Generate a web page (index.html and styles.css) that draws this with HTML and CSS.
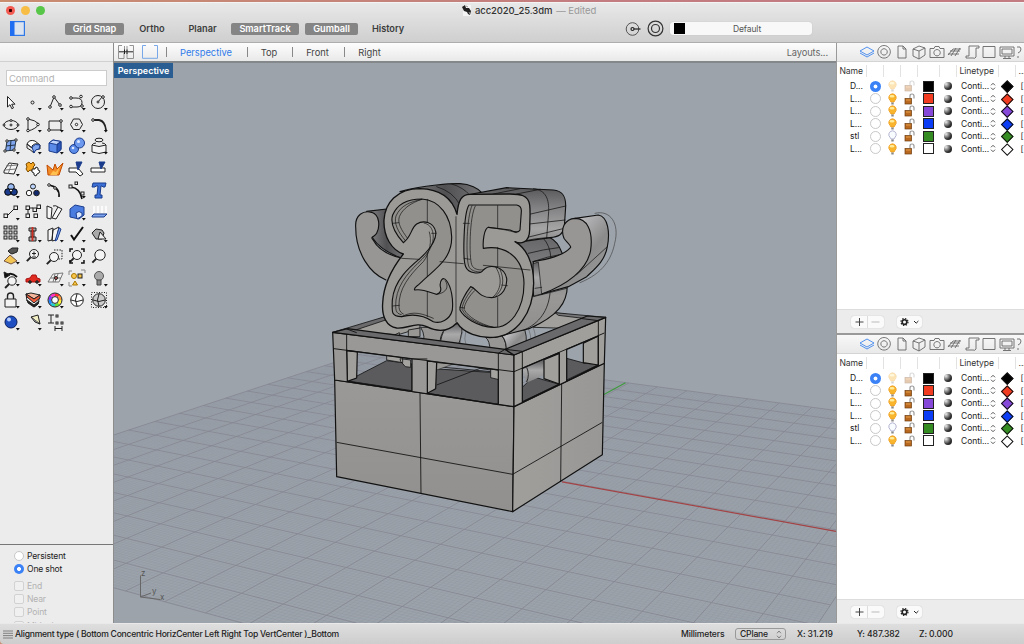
FILE: index.html
```html
<!DOCTYPE html>
<html lang="en">
<head>
<meta charset="utf-8">
<title>acc2020_25.3dm</title>
<link rel="stylesheet" href="styles.css">
</head>
<body>
<div class="window">
  <header class="titlebar">
    <div class="title-row">
      <div class="lights"><i class="light close"></i><i class="light min"></i><i class="light max"></i></div>
      <div class="doc-title">
        <svg width="11" height="11" viewBox="0 0 11 11"><path d="M2 0h8v11H2z" fill="#f4f4f4"/><path d="M1 2l3-2 1 3 3 0 2 3-1 4-2-1-1-2-3-1z" fill="#222"/><path d="M5 1l2 1M8 7l1 2" stroke="#999"/></svg>
        <span class="doc-name">acc2020_25.3dm</span><span class="edited">— Edited</span>
      </div>
    </div>
    <div class="tool-row">
      <svg class="side-toggle" width="15" height="15" viewBox="0 0 15 15"><rect x=".6" y=".6" width="13.8" height="13.8" fill="#dbe3ee" stroke="#2f78e8" stroke-width="1.2"/><rect width="4.5" height="15" fill="#1f6df0"/></svg>
      <div class="toggles">
        <span class="toggle on" style="width:59px">Grid Snap</span>
        <span class="toggle" style="width:56px">Ortho</span>
        <span class="toggle" style="width:45px">Planar</span>
        <span class="toggle on" style="width:68px">SmartTrack</span>
        <span class="toggle on" style="width:53px">Gumball</span>
        <span class="toggle" style="width:48px">History</span>
      </div>
      <div class="right-tools">
        <svg width="16" height="16" viewBox="0 0 16 16" fill="none" stroke="#555"><circle cx="7.5" cy="8" r="6.3"/><circle cx="7.5" cy="8" r="1.5" stroke="#222" stroke-width="1.2"/><path d="M9 8h6.5" stroke="#222" stroke-width="1.2"/></svg>
        <svg width="17" height="17" viewBox="0 0 17 17" fill="none" stroke="#333" stroke-width="1.2"><circle cx="8.5" cy="8.5" r="7.4"/><circle cx="8.5" cy="8.5" r="4"/></svg>
        <div class="layer-select"><i class="black"></i><span>Default</span></div>
      </div>
    </div>
  </header>
  <main class="workspace">
    <aside class="sidebar">
      <div class="side-head"></div>
      <div class="command-box"><div class="command">Command</div></div>
      <div class="tools" id="tools"></div>
      <div class="osnap">
        <div class="opt"><i class="radio"></i>Persistent</div>
        <div class="opt"><i class="radio checked"></i>One shot</div>
        <div class="opt off first"><i class="check"></i>End</div>
        <div class="opt off"><i class="check"></i>Near</div>
        <div class="opt off"><i class="check"></i>Point</div>
        <div class="opt off"><i class="check"></i>Midpoint</div>
      </div>
    </aside>
    <section class="center">
      <nav class="tabs">
        <svg width="16" height="14" viewBox="0 0 16 14" fill="none" stroke="#888"><path d="M4 .5H.5v13h5.500V8M11.500 .5h4v13H9V8M6.500 1v5M9 1v5" stroke-width=".9"/><path d="M1 6.800h14M6.500 4.500v4.500M9 4.500v4.500" stroke="#222"/></svg>
        <svg class="single" width="16" height="14" viewBox="0 0 16 14"><path d="M4 .5H.5v12.800h15V.5H12" fill="none" stroke="#79a8e8"/></svg>
        <i class="bar"></i><span class="tab active" style="width:76px">Perspective</span>
        <i class="bar"></i><span class="tab" style="width:40px">Top</span>
        <i class="bar"></i><span class="tab" style="width:47px">Front</span>
        <i class="bar"></i><span class="tab" style="width:47px">Right</span>
        <span class="layouts">Layouts...</span>
      </nav>
      <div class="viewport">
        <svg class="scene" width="722" height="560" viewBox="114 63 722 560">
          <defs>
            <linearGradient id="front" x1="0" y1="0" x2="0" y2="1"><stop offset="0" stop-color="#9a9997"/><stop offset="1" stop-color="#91908e"/></linearGradient>
            <linearGradient id="side" x1="0" y1="0" x2="1" y2="0"><stop offset="0" stop-color="#a09f9c"/><stop offset="1" stop-color="#989795"/></linearGradient>
            <linearGradient id="bevel" x1="0" y1="0" x2="1" y2="0"><stop offset="0" stop-color="#8a8a8b"/><stop offset=".55" stop-color="#505053"/><stop offset="1" stop-color="#747476"/></linearGradient>
            <linearGradient id="cyl" x1="0" y1="0" x2="1" y2="1"><stop offset="0" stop-color="#737375"/><stop offset=".3" stop-color="#bdbdbf"/><stop offset=".6" stop-color="#8b8b8c"/><stop offset="1" stop-color="#a4a3a2"/></linearGradient>
            <linearGradient id="drop" x1="0" y1="0" x2="0" y2="1"><stop offset="0" stop-color="#5e5e60"/><stop offset=".45" stop-color="#a9a9aa"/><stop offset="1" stop-color="#848485"/></linearGradient>
            <linearGradient id="cap" x1="0" y1="0" x2="0" y2="1"><stop offset="0" stop-color="#58585a"/><stop offset=".35" stop-color="#808082"/><stop offset=".75" stop-color="#a5a5a6"/><stop offset="1" stop-color="#88888a"/></linearGradient>
            <linearGradient id="belly" x1="0" y1="0" x2="0" y2="1"><stop offset="0" stop-color="#636365"/><stop offset=".3" stop-color="#7c7c7e"/><stop offset=".6" stop-color="#999897"/><stop offset="1" stop-color="#8e8d8c"/></linearGradient>
          </defs>
          <g id="grid"></g>
          <path d="M562 481.800L836 531.300" stroke="#a34345" stroke-width="1.200"/>
          <path d="M603 395L625.500 382.700" stroke="#3f9a3f" stroke-width="1.200"/>
          <!-- box interior -->
          <g transform="translate(320 300) scale(.33333)" stroke="#151515" stroke-width="2.500" stroke-linejoin="round">
            <path d="M80 96L195 50L300 60L300 84L235 104Z" fill="#9f9e9b"/>
            <path d="M38 97L195 50L203 58L80 99Z" fill="#6b6b6d"/>
            <path d="M640 82L705 38L800 52L790 65L735 85Z" fill="#a1a09d"/>
            <path d="M705 38L857 52L815 58L715 46Z" fill="#77777a"/>
            <path d="M225 104l13-6v10zM265 90l35 -6v26h-35z" fill="#989794"/>
            <path d="M82 243L200 182L276 192V272ZM322 280V205L510 217L535 240V315ZM607 305V262L640 230L672 240L718 253ZM740 240V175L795 190L840 192Z" fill="#5b5b5e"/>
            <path d="M350 255L480 205L525 212M350 200L535 217" fill="none"/>
            <path d="M200 160l48 8v20l-48-8zM240 176l32 4v22l-16-2-14-16zM512 207l25 4v28l-25-6z" fill="#a4a3a0"/>
            <path d="M350 188L400 192L350 210z" fill="#999895" stroke-width="1.500"/>
            <path d="M607 206L672 180V225L620 248Z" fill="url(#drop)" stroke="none"/><path d="M620 202q10 22 0 44" fill="none"/>
            <path d="M305 140Q320 110 302 82L378 82Q356 110 360 140Z" fill="#969593"/>
            <path d="M360 140Q362 105 378 82L422 68Q434 85 412 145Z" fill="url(#drop)"/>
            <path d="M424 140q-8-20 5-45M440 145q-10-30-2-55" fill="none" stroke="#555" stroke-width="1.500"/>
            <path d="M510 155Q510 120 496 112L545 106Q562 130 558 156Z" fill="#979694"/>
            <path d="M558 156Q562 125 545 106L608 76Q625 105 616 148Z" fill="url(#cyl)"/>
            <path d="M622 82q15 22 8 55M637 79q12 20 8 50" fill="none" stroke="#555" stroke-width="1.500"/>
          </g>
          <!-- box body and frame -->
          <g transform="translate(320 300) scale(.33333)" stroke="#111" stroke-width="3.600" stroke-linejoin="round">
            <path d="M44 240L582 320L578 635L50 530Z" fill="url(#front)"/>
            <path d="M582 320L853 190L847 464L578 635Z" fill="url(#side)"/>
            <path d="M300 280L303 580M50 427L578 523L847 367M725 252L722 545" fill="none" stroke-width="2.600"/>
            <path d="M80 152L112 156L110 234L82 244ZM322 183L350 186L347 266L322 280ZM672 179L718 160V252L672 236ZM790 130L835 108V195L790 188Z" fill="#a19f9c"/>
            <path fill-rule="evenodd" d="M38 97L582 165V320L44 240ZM80 151L276 177V274L82 244ZM322 183L535 210V314L322 280Z" fill="#999896"/>
            <path fill-rule="evenodd" d="M582 165L857 52L853 190L582 320ZM607 205L718 158V252L607 306ZM740 148L835 108V195L740 243Z" fill="#a09f9c"/>
            <path d="M38 97L82 86L555 148L582 165Z" fill="#6a6a6c"/>
            <path d="M582 165L555 148L802 48L857 52Z" fill="#6a6a6c"/>
            <path d="M535 160L555 148L607 154M80 102V152M535 160V210M607 154V206M42 146L582 215L853 99M277 177H322M835 62V110M78 86L110 98M780 55L835 62" fill="none" stroke-width="2.800"/>
          </g>
          <!-- numeral ornament -->
          <g transform="translate(320 170) scale(.33333)" stroke="#111" stroke-width="3.400" stroke-linejoin="round" stroke-linecap="round">
            <path d="M140 124L200 117L215 190L250 252L245 265Q180 240 158 204Z" fill="url(#bevel)"/>
            <path d="M107 170C105 135 130 120 155 127C180 135 180 170 170 190C165 200 150 200 158 208C175 240 210 258 250 265L198 330C150 310 107 250 107 170Z" fill="#979694" stroke="none"/>
            <path d="M198 330C150 310 107 250 107 170C105 135 130 120 155 127C180 135 180 170 170 190C165 200 150 200 158 208C175 240 210 258 250 265" fill="none"/>
            <path d="M240 65C310 45 400 40 420 41C450 42 475 55 485 68L450 80L411 133L330 70Z" fill="url(#bevel)"/>
            <path d="M350 50Q400 65 420 105M395 42Q430 52 450 76" fill="none" stroke-width="2"/>
            <path d="M640 190L690 203C720 215 740 270 742 340C744 400 710 440 630 475L525 502L560 200Z" fill="url(#belly)"/>
            <path d="M440 75L560 53L700 60C725 62 738 75 737 110L733 170C728 195 715 200 690 203L586 218L560 100Z" fill="url(#cap)"/>
            <path d="M520 72L600 56M590 72L660 58M640 56C680 60 687 90 686 125L680 205M628 133L737 108M628 162L735 150M610 205L733 175M610 215Q635 205 690 203M625 250Q670 238 715 233M638 275Q680 260 729 252M670 205Q690 225 693 265M690 370C685 420 660 460 610 481M640 380L740 355" fill="none" stroke-width="2.200"/>
            <path d="M765 145L835 135C865 140 870 190 862 230C855 275 820 300 800 320L745 350L665 372L760 300Z" fill="url(#cyl)"/>
            <path d="M640 275C680 268 730 258 752 232C752 225 738 215 732 205C720 175 735 147 765 145C800 145 820 180 812 240C802 300 740 345 665 372L640 376Z" fill="#979694"/>
            <path d="M640 281L655 276L665 372L642 378Z" fill="url(#drop)" stroke-width="2"/>
            <path d="M770 314L862 230M645 355L665 352" fill="none" stroke-width="2"/>
            <path d="M825 130C870 118 900 160 884 220C875 265 850 310 780 338" fill="none" stroke="#444" stroke-width="2"/>
            <path d="M411 133C400 95 370 58 300 56C230 56 195 100 192 150C190 200 215 240 250 252C220 290 190 340 188 400C185 440 200 470 230 474C260 477 290 455 320 470C360 490 390 480 411 458C430 490 480 505 520 502C590 497 640 430 641 340C641 280 620 235 585 215C600 222 628 222 629 180C629 150 632 130 629 105C625 75 600 72 570 72L450 73C425 73 415 90 411 133Z" fill="#9b9a97" stroke-width="4"/>
            <path d="M250 218C225 190 210 160 218 135C235 95 270 87 305 87C360 90 393 140 395 200C397 270 340 300 300 340C290 350 280 352 284 360C310 355 335 370 350 373C360 370 365 362 361 350C358 330 370 320 378 330C395 350 400 390 397 420C390 450 360 462 340 455C310 435 280 430 245 440C215 440 215 430 217 390C222 330 270 290 300 265C340 230 350 200 347 185C340 155 310 150 290 162C272 175 275 200 250 218Z" fill="#91908d"/>
            <path d="M447 105L590 105C600 107 605 112 604 125L600 180C595 190 585 187 570 180L505 172C492 176 488 215 490 235C550 225 610 255 612 340C612 420 570 475 520 472C470 470 430 440 420 420C418 400 440 365 452 350C470 355 475 383 515 383C550 380 562 350 560 325C553 290 510 280 490 300C480 315 445 310 437 290C428 270 430 130 447 105Z" fill="#91908d"/>
            <path d="M256 212C234 185 221 160 228 138C242 106 270 96 305 88M262 204C244 180 232 160 238 140C248 115 275 98 305 88M244 434C226 430 226 420 228 390C235 335 275 298 306 268C335 240 344 210 338 185C334 170 325 162 312 159M250 432C236 425 236 415 238 390C244 340 285 300 310 275C330 250 336 210 328 186M245 440C280 420 310 432 340 445M376 332C388 350 380 368 352 373" fill="none" stroke-width="2"/>
            <path d="M456 107C440 140 437 260 446 288C450 302 470 306 480 306M466 108C448 140 447 260 455 284C460 298 475 300 488 300M464 362C450 375 433 400 432 418C445 442 480 462 520 472M458 356C444 372 427 398 426 418C440 446 480 466 520 472M540 298C555 330 550 360 525 380M528 293C548 325 544 360 518 382M505 172C540 176 570 182 588 188" fill="none" stroke-width="2"/>
            <path d="M322 88V158M322 248V320M322 366V440M408 140V455M533 107V175M533 232V290M533 383V470M245 265L298 268M360 275L430 281M490 286L630 300M218 160L236 158M218 408L238 406M430 160L448 160M432 265L450 268M420 412L434 414M545 345L562 347M335 190L348 190" fill="none" stroke-width="2"/>
          </g>
          <g stroke="#666" fill="none"><path d="M140.500 575.500V597L160 599.500M140.500 597L151 593"/></g>
          <g class="axis"><text x="141" y="576">z</text><text x="152" y="594">y</text><text x="160" y="600">x</text></g>
        </svg>
        <span class="view-label">Perspective</span>
      </div>
    </section>
    <aside class="panels">
      <section class="panel top-panel"></section>
      <section class="panel"></section>
    </aside>
  </main>
  <footer class="status">
    <svg width="10" height="9" viewBox="0 0 10 9"><path d="M0 1h10M0 3.300h10M0 5.600h10M0 8h10" stroke="#777" stroke-width=".9"/></svg>
    <span class="prompt">Alignment type ( Bottom Concentric HorizCenter Left Right Top VertCenter )_Bottom</span>
    <span class="units">Millimeters</span>
    <span class="cplane">CPlane<svg width="6" height="9" viewBox="0 0 6 9"><path d="M1 3.300l2-2.300 2 2.300M1 5.700l2 2.300 2-2.300" fill="none" stroke="#777" stroke-width=".9"/></svg></span>
    <span class="coord cx">X: 31.219</span><span class="coord cy">Y: 487.382</span><span class="coord cz">Z: 0.000</span>
  </footer>
</div>
<script src="app.js"></script>
</body>
</html>
```
FILE: styles.css
```css
* { box-sizing: border-box; }
body { margin: 0; width: 1024px; height: 644px; overflow: hidden; background: linear-gradient(90deg, #c98d70, #c37c80 60%, #c27c82); font-family: Inter, "Open Sans", sans-serif; font-size: 9px; color: #222; }
svg { display: block; flex: none; }
i { flex: none; }
.window { height: 644px; padding-top: 2px; display: flex; flex-direction: column; }
.titlebar { height: 41px; background: linear-gradient(#e8e8e8, #cfcfcf); border-bottom: 1px solid #adadad; border-top: 1px solid #f4f4f4; }
.title-row { height: 14px; display: flex; align-items: center; padding-left: 6px; }
.lights { display: flex; gap: 6px; width: 455px; }
.light { width: 9px; height: 9px; border-radius: 50%; }
.close { background: radial-gradient(circle, #300 0 1.300px, #f35b52 2px); }
.min { background: #f7bd45; }
.max { background: #58c648; }
.doc-title { display: flex; align-items: center; }
.doc-name { margin-left: 3px; color: #333; font-size: 9.500px; font-weight: 500; letter-spacing: -.1px; }
.edited { margin-left: 4px; color: #999; font-size: 9.500px; letter-spacing: -.05px; }
.tool-row { height: 23px; display: flex; align-items: center; padding-left: 10px; }
.toggles { display: flex; align-items: center; margin-left: 40px; }
.toggle { height: 12px; line-height: 12px; text-align: center; border-radius: 2px; font-weight: 600; font-size: 9.200px; color: #3c3c3c; }
.toggle.on { background: #858585; color: #fff; }
.toggle:nth-child(3) { margin-right: 6px; }
.toggle:nth-child(4) { margin-right: 6px; }
.toggle:nth-child(5) { margin-right: 6px; }
.right-tools { display: flex; align-items: center; gap: 6px; margin-left: 213px; }
.layer-select { width: 142px; height: 13px; background: #f8f8f8; border-radius: 3px; display: flex; align-items: center; padding-left: 4px; box-shadow: 0 0 1px #aaa; }
.layer-select .black { width: 11px; height: 11px; background: #000; }
.layer-select span { flex: 1; text-align: center; font-size: 8.500px; letter-spacing: -.1px; color: #555; padding-right: 3px; }
.workspace { height: 580px; display: flex; }
.sidebar { width: 114px; background: #ececec; border-right: 1px solid #8d8d8d; display: flex; flex-direction: column; }
.side-head { height: 19px; background: linear-gradient(#f8f8f8, #ededed); border-bottom: 1px solid #d0d0d0; }
.command-box { height: 29px; padding: 8px 6px 0; }
.command { height: 16px; border: 1px solid #ccc; background: #fff; color: #b3b3b3; font-size: 9.500px; line-height: 16px; padding-left: 2px; letter-spacing: -.1px; }
.tools { display: grid; grid-template-columns: repeat(5, 22px); grid-auto-rows: 22px; height: 453px; align-content: start; }
.tool { fill: none; stroke: #222; stroke-width: 1; }
.osnap { border-top: 1px solid #777; height: 79px; overflow: hidden; padding: 4px 0 0 14px; }
.opt { display: flex; align-items: center; gap: 3px; height: 13.300px; font-size: 8.600px; letter-spacing: -.18px; }
.opt.first { margin-top: 3.500px; }
.off { color: #b2b2b2; }
.radio { width: 11px; height: 11px; border-radius: 50%; background: #fff; border: 1px solid #c8c8c8; }
.radio.checked { border: 0; background: radial-gradient(circle, #fff 0 1.600px, #3b82f6 2.300px); }
.check { width: 10px; height: 10px; border-radius: 2px; background: #f0f0f0; border: 1px solid #d2d2d2; }
.opt .radio { width: 10px; height: 10px; }
.center { width: 722px; }
.tabs { height: 20px; background: linear-gradient(#fdfdfd, #e9e9e9); border-bottom: 2px solid #85888a; display: flex; align-items: center; padding-left: 4px; }
.single { margin-left: 8px; }
.bar { width: 1px; height: 10px; background: #888; }
.single + .bar { margin-left: 8px; }
.tab { padding: 0 2px 0 0; text-align: center; color: #444; font-size: 9.300px; }
.bar + .tab { margin: 0 2px; }
.tab.active { color: #2f7bea; }
.layouts { margin-left: auto; margin-right: 8px; color: #666; font-size: 9.300px; letter-spacing: -.1px; }
.viewport { position: relative; height: 560px; background: #9ca3ab; overflow: hidden; }
.view-label { position: absolute; left: 0; top: 0; width: 59px; height: 15px; line-height: 15px; background: #2a5d92; color: #fff; font-weight: 600; font-size: 9px; text-align: center; }
.major { stroke: #858791; stroke-width: .85; fill: none; }
.minor { stroke: #878d97; stroke-width: .35; fill: none; opacity: .5; }
.axis { font-size: 8px; fill: #555; }
.panels { width: 188px; background: #fff; border-left: 1px solid #999; overflow: hidden; }
.panel { height: 288px; display: flex; flex-direction: column; }
.top-panel { height: 292px; border-bottom: 2px solid #999; }
.icon-bar { height: 19px; flex: none; background: linear-gradient(#f8f8f8, #e9e9e9); border-bottom: 1px solid #d4d4d4; display: flex; padding: 1px 0 0 20.500px; }
.icon-bar svg { fill: none; stroke: #666; stroke-width: .9; width: 17.500px; height: 16px; }
.icon-bar svg:first-child { stroke: #3f86ee; }
.head, .row { display: grid; grid-template-columns: 29.500px 17px 17.500px 16.500px 22px 17.500px 41.500px 17.500px 12px; flex: none; white-space: nowrap; align-items: center; }
.head { height: 18px; font-size: 8.600px; letter-spacing: -.1px; color: #333; padding-bottom: 1px; }
.head span { height: 12px; line-height: 12px; border-right: 1px solid #e2e2e2; padding-left: 2.500px; }
.row { height: 12.500px; font-size: 8.500px; letter-spacing: -.05px; }
.row > * { justify-self: center; }
.row .nm { justify-self: start; padding-left: 13px; }
.row .lt { justify-self: start; padding-left: 4px; display: flex; align-items: center; gap: 1px; }
.swatch { width: 11px; height: 11px; border: 1px solid #222; }
.ball { width: 8px; height: 8px; border-radius: 50%; background: radial-gradient(circle at 25% 25%, #eee, #333 60%, #111); }
.dia { width: 8.500px; height: 8.500px; border: 1px solid #111; transform: rotate(45deg); }
.faded { opacity: .35; }
.panel-foot { margin-top: auto; height: 24px; flex: none; background: #ececec; border-top: 1px solid #ddd; display: flex; align-items: center; padding-left: 14px; }
.buttons { display: flex; background: #fafafa; border-radius: 3px; height: 12px; width: 33px; align-items: center; box-shadow: 0 0 1px #aaa; }
.gear { margin-left: 13px; width: 25px; height: 12px; background: #fafafa; border-radius: 3px; box-shadow: 0 0 1px #aaa; }
.status { height: 21px; background: linear-gradient(#dedede, #cdcdcd); border-top: 1px solid #e9e9e9; border-bottom-left-radius: 4px; display: flex; align-items: center; padding-left: 3px; font-size: 8.600px; font-weight: 500; white-space: nowrap; }
.prompt { margin-left: 2px; width: 666px; letter-spacing: -.25px; }
.units { width: 54px; letter-spacing: -.15px; }
.cplane { width: 51px; height: 12px; border: 1px solid #999; border-radius: 3px; display: flex; align-items: center; justify-content: space-between; padding: 0 3px 0 4px; letter-spacing: -.2px; }
.coord { width: 60px; letter-spacing: -.1px; }
.cx { margin-left: 11px; }
.cy { width: 62px; }
```
FILE: app.js
```js
// Perspective ground grid: projective map of the [-1,1] square onto the screen quad.
function project(u, v) {
  const q = [[-139.6, 518.3], [729.5, 756.5], [950, 425.6], [374.3, 349.3]];
  const s = (u + 1) / 2, t = (v + 1) / 2;
  const dx1 = q[1][0] - q[2][0], dx2 = q[3][0] - q[2][0], sx = q[0][0] - q[1][0] + q[2][0] - q[3][0];
  const dy1 = q[1][1] - q[2][1], dy2 = q[3][1] - q[2][1], sy = q[0][1] - q[1][1] + q[2][1] - q[3][1];
  const d = dx1 * dy2 - dx2 * dy1;
  const g = (sx * dy2 - dx2 * sy) / d, h = (dx1 * sy - sx * dy1) / d;
  const w = g * s + h * t + 1;
  return [
    ((q[1][0] - q[0][0] + g * q[1][0]) * s + (q[3][0] - q[0][0] + h * q[3][0]) * t + q[0][0]) / w,
    ((q[1][1] - q[0][1] + g * q[1][1]) * s + (q[3][1] - q[0][1] + h * q[3][1]) * t + q[0][1]) / w
  ].map(n => n.toFixed(2)).join(' ');
}
let major = '', minor = '';
for (let i = -100; i <= 100; i++) {
  const k = i / 100;
  const d = `M${project(k, -1)}L${project(k, 1)}M${project(-1, k)}L${project(1, k)}`;
  if (i % 10) minor += d; else major += d;
}
document.getElementById('grid').innerHTML = `<path class="minor" d="${minor}"/><path class="major" d="${major}"/>`;

// Tool palette, one 22px cell each. A truthy second entry adds the flyout marker.
const B = '#7fa5ee', N = '#1b3c8c';
const c = (x, y, r, f = 'none', s = '#222') => `<circle cx="${x}" cy="${y}" r="${r}" fill="${f}" stroke="${s}"/>`;
const p = (d, f = 'none', s = '#222', w = 1) => `<path d="${d}" fill="${f}" stroke="${s}" stroke-width="${w}"/>`;
const sq = (x, y, s = 3.500, f = '#eee') => `<rect x="${x}" y="${y}" width="${s}" height="${s}" fill="${f}"/>`;
const lens = (x, y, r) => p(`M${x - r * .7} ${y + r * .7}l-4 4`, 'none', '#222', 2) + c(x, y, r, '#f4f4f4');
const tools = [
  [p('M7.500 5.500v10.500l2.500-2.300 1.800 4 1.700-.8-1.800-3.700h3.300z', '#fff')],
  [c(10.500, 11.500, 1.500), 1],
  [p('M6 16L10 6l7 9.500') + c(6, 16, 1.300, '#fff') + c(10, 6, 1.300, '#fff') + c(16, 14, 1.300, '#fff'), 1],
  [p('M5 7h5q6 0 6 4.500T11 16H5') + c(5, 7, 1.300, '#fff') + c(15, 5.500, 1.300, '#fff') + c(5, 15.500, 1.300, '#fff') + c(16, 15, 1.300, '#fff'), 1],
  [c(10, 11, 6.500) + p('M10 11l4-5') + c(10, 11, 1, '#fff') + c(15, 6, 1.300, '#fff'), 1],
  ['<ellipse cx="11" cy="12" rx="7" ry="4.500"/>' + c(11, 12, 1) + c(4, 12, 1, '#fff') + c(18, 12, 1, '#fff') + c(11, 7.500, 1, '#fff'), 1],
  [p('M6 6v12Q14 16 17 11 13 7 6 6') + c(6, 6, 1.300, '#fff') + c(6, 17.500, 1.300, '#fff') + c(16, 11.500, 1.300, '#fff'), 1],
  [p('M5 8h12v9H5z') + c(5, 17, 1.300, '#fff') + c(17, 8, 1.300, '#fff'), 1],
  [p('M7.500 6h6l3 5.500-3 5h-6l-3-5z') + c(10.500, 11.500, 1.200, '#fff'), 1],
  [p('M5 7h6q6 1 7 10', 'none', '#222', 1.800) + c(5, 7, 1.300, '#fff'), 1],
  [p('M7 6l9-1-1.500 10-9 1z', B, '#234') + p('M11 5.500l-1 10M6 11l9-1', 'none', '#234') + c(7, 6, 1.200, '#fff') + c(16, 5, 1.200, '#fff') + c(5, 16, 1.200, '#fff') + c(14, 15, 1.200, '#fff'), 1],
  [p('M5 9Q7 4 13 6l5 4q-6-1-8 3z', '#fff') + p('M5 9l5 4v-2q3-4 8-1v4q-5-1-6 4-3-3-7-5z', 'none') + p('M10 12q3-4 8-2l-1 4q-4 0-5 4z', B, N), 1],
  [p('M5 8l4-3 8 1.500v8L13 18l-8-2z', '#5b8be8', N) + p('M5 8l7.500 1.500L17 6.500 9 5z', '#bcd3fb', N) + p('M13 10v8l4-3.500v-8z', '#2d58bd', N), 1],
  [c(8, 14, 4.500, '#5b8be8', N) + c(13.500, 8, 5, '#6d99ee', N) + c(12.500, 6.500, 1.500, '#dce8ff', 'none') + c(7, 13, 1.300, '#dce8ff', 'none'), 1],
  ['<ellipse cx="11" cy="5" rx="4" ry="1.800"/>' + p('M4 10q7 3 14 0v7q-7 3-14 0z', '#f4f4f4') + p('M4 10q1-2 4-2M18 10q-1-2-4-2'), 1],
  [p('M4 14l5-8 9 1-4 10-10-1z', '#f7f7f7') + p('M5 13l11-1M6 9l11-1M8 17l4-11', 'none', '#777'), 1],
  [p('M4 7l3-2 2 2 2-2 2 3-2 2 2 3-3 1-2-1-2 2-2-3 1-2z', '#f5a623', '#7a4b00') + p('M10 12l3 0 1-2 2 1 0 2 2 1-1 2-2 1-1 2-2-1 0-2-2-1z', '#fff')],
  [p('M4 18L3 8l6 5 2-6 2 5 6-6-4 12z', '#f28c28', '#c24b00') + p('M6 18l3-4 3 1 4-6-3 9z', '#ffc04d', 'none')],
  [p('M3 11h9l5 6-3 2-4-4H3z', '#fff') + p('M10 5h6l-4 8z', N, N)],
  [p('M3 11h14v4H3z', '#fff') + p('M11 5h6l-4 7z', N, N)],
  [c(11, 8, 3.300, '#9bbcf5', '#000') + c(8, 13, 3.300, N, '#000') + c(14, 13, 3.300, N, '#000') + c(11, 11.500, 1.500, '#fff', '#000'), 1],
  [c(11, 7.500, 2.500, '#bcd3fb') + c(7, 14, 2.700, '#fff') + c(14.500, 14, 2.800, '#12296e'), 0],
  [p('M5 6q11 2 10 12', 'none', '#111', 1.600) + c(5, 6, 1.300, '#fff') + c(11, 9, 1.300, '#fff')],
  [p('M5 8q9 1 11 12', 'none', '#111', 1.600) + sq(9, 3, 2.500) + sq(3, 6, 3) + sq(15, 13, 3), 1],
  [p('M5 4h13l-1 4h-2l-1-1h-1l-1 9h2v3H7v-3h2l1-9H8L7 8H4z', '#3c70d6', N)],
  [sq(4, 13) + sq(14, 5) + p('M8 14l6-6'), 1],
  [sq(4, 5) + sq(11, 7) + sq(4, 13) + sq(12, 13) + sq(15, 4) + p('M7 7h4M6 9v4')],
  [p('M3 5l5 2-1 11-4-1zM8 17l6-11 4 2-6 10z', '#f7f7f7') + p('M9 5q3-1 5 1')],
  [p('M4 8l5-4 9 2v8l-5 4-9-2z', '#4b7de0', N) + p('M10 12q3-3 6 0v3l-5 3z', '#d9e6ff', N), 1],
  [p('M4 15l2-2h13l-3 3H4z', B, N) + p('M6 12V5M10 12V5M14 12V5M18 12V5', 'none', '#fff', 1.500)],
  [[4, 9, 14].map(y => [4, 9, 14].map(x => sq(x, y - 1, 3, '#ddd')).join('')).join(''), 1],
  [p('M7 5h7v3H7zM9 8h3v6H9zM7 14h7v4H7z', '#aaa') + p('M10.500 4v14', 'none', '#cc2f22', 1.800), 1],
  [p('M4 7l5-2-1 12-4 1zM9 7l6-3-3 13-4 1z', '#f5f5f5') + p('M15 5l2 1-4 11-2 1z', B, N), 1],
  [p('M5 12l3 4.500L17 4', 'none', '#111', 2), 1],
  [p('M4 10l4-4 6 1 2 3-2 6-6 0z', '#aaa') + p('M12 9l6 7H10z', '#eee'), 1],
  [p('M4 16l6-6 7 6-6 3z', '#f1c453', '#754') + p('M8 6l4-3 6 0-1 4-5 2-2-1z', '#555'), 1],
  [lens(12, 9, 4.500) + p('M10 8.500h4M12 6.500v4M10 12h4')],
  [lens(10, 12, 4.500) + '<path d="M10 5h8v9h-5" stroke-dasharray="1.500 1.200"/>'],
  [lens(11, 10, 4.500) + p('M4 7V4h3M15 4h3v3M4 15v3h3M18 15v3h-3', 'none', '#111', 1.500)],
  [lens(12, 10, 5.200)],
  [lens(12, 14, 4.200) + p('M5 9q6-5 12 1', 'none', '#111', 1.800) + p('M4 5l1 6 5-3z', '#111'), 1],
  [p('M4 12l4-1 2-3h4l1 3 3 1v3H4z', '#e02b20', '#a11') + c(8, 15, 1.300, '#333') + c(15, 15, 1.300, '#333'), 1],
  [p('M4 15l5-8 10-1-4 9zM7 11h10M11 7l-2 8M14 7l-3 8', '#f4f4f4', '#777') + c(12, 11, 1.500, '#b55'), 1],
  [c(8, 9, 2.500, '#f7c64b', '#a70') + sq(12, 7, 4, '#f7c64b') + p('M9 14l2.500 4h-5z', '#f7c64b', '#a70') + p('M3 8V4h3M15 3h4v3M3 15v4h3', 'none', '#888'), 1],
  [c(11, 9, 4.500, '#aaa', '#555') + p('M9 13h4v5H9z', '#888', '#444'), 1],
  [p('M5 10h11v8H5z', '#f4f4f4') + p('M7.500 10V7q0-3 3-3t3 3v3', 'none', '#222', 1.400), 1],
  [p('M4 5l9 3 5-2-2 9-4 3-7-6z', '#fff') + p('M4 5l5-1 9 2-6 4z', '#f4b79c') + p('M4 5l8 5 6-4v3l-6 5-7-6z', '#ef5c3b') + p('M5 11l7 5 5-4-1 3-4 3-6-4z', '#222'), 1],
  ['', 1, 'wheel'],
  [c(11, 11, 6.300, '#fff') + p('M11 5q-3 6 0 12M5 11q6 3 12 0')],
  [c(11, 11, 6.300, '#ccc') + p('M11 5q-3 6 0 12M5 11q6 3 12 0') + '<rect x="3.500" y="3.500" width="15" height="15" stroke-dasharray="1 1.500"/>', 1],
  [c(11, 11, 6, '#1f4fc0', '#0b1f5c') + c(9, 8.500, 2, '#b7cfff', 'none'), 1],
  [p('M9 6l7-2 2 9z', '#f2f0c4') + p('M9 6l4 5 5 2', '#aaa', '#222'), 1],
  [p('M4 4h6M4 12h6M7 4v8M11 15v5M18 15v5M11 17.500h7') + sq(12, 4, 2) + sq(12, 11, 2) + sq(17, 11, 2)]
];
const wheel = ['#f33', '#f93', '#fe3', '#6d3', '#2cc', '#28f', '#83f', '#f3b'].map((k, i) =>
  `<path d="M11 5.800A5.200 5.200 0 0 1 14.700 7.300" stroke="${k}" stroke-width="3" transform="rotate(${i * 45} 11 11)"/>`).join('') + c(11, 11, 7) + c(11, 11, 3.400, '#fff');
document.getElementById('tools').innerHTML = tools.map(([art, fly, special]) =>
  `<svg class="tool" width="22" height="22" viewBox="0 0 22 22">${special ? wheel : art}${fly ? '<path d="M15.800 17h4l-2 2.600z" fill="#111" stroke="none"/>' : ''}</svg>`).join('');

// Layer panels.
const icons = [
  'M2 7l7-4 7 4-7 4zM2 9l7 4 7-4',
  'M9 1.500a6.300 6.300 0 1 0 .1 0zM9 4.700a3.200 3.200 0 1 0 .1 0z',
  'M5 2h5l3 3v9H5zM10 2v3h3',
  'M3 5l6-3 6 2v7l-6 4-6-3zM3 5l6 2 6-3M9 7v8',
  'M2 4.500h4l1-2h4l1 2h4v9H2zM9 5.500a3.200 3.200 0 1 0 .1 0z',
  'M3 11l5-6M6 12l5-8M10 12l5-8M3 10h11M5 7h10M8 5h8',
  'M6 2h10v2h-3v9q-1 2-3 1H3v-2h3z',
  'M3 2.500h12v11H3z',
  'M2 3h14v9H2zM4 5h10v5H4zM7 12v2M11 12v2M5 14.500h8',
  'M2 3q4-1 4 2t-3 4M3 12v2'
];
const bulb = on => `<svg width="11" height="12" viewBox="0 0 11 12"><path d="M5.500.8a4 3.800 0 0 1 2.500 6.500L7 9H4L3 7.300A4 3.800 0 0 1 5.500.8z" fill="${on ? '#f9b52c' : '#f8fcff'}" stroke="${on ? '#ef9d1c' : '#aac'}" stroke-width=".9"/><path d="M4.300 10.500h2.400" stroke="#888" stroke-width="2"/>${on ? '<ellipse cx="5" cy="3.300" rx="2.500" ry="1.200" fill="#ffec9c"/>' : ''}</svg>`;
const lock = '<svg width="11" height="12" viewBox="0 0 11 12"><rect x="1" y="5.500" width="6.500" height="5.500" fill="#b8691f" stroke="#6e3b0d" stroke-width=".7"/><path d="M2 7h4.500" stroke="#e5a04c"/><path d="M6 5V3q0-2 2-2t2 2v2.500" fill="none" stroke="#999" stroke-width="1.200"/></svg>';
const arrows = '<svg width="6" height="9" viewBox="0 0 6 9"><path d="M1 3.300l2-2 2 2M1 5.700l2 2 2-2" fill="none" stroke="#444" stroke-width=".9"/></svg>';
const layers = [['D...', '#000'], ['L...', '#f23c22'], ['L...', '#8548d8'], ['L...', '#0a3df5'], ['stl', '#348c22'], ['L...', '#fff']];
const rows = layers.map(([name, color], i) => `<div class="row"><span class="nm">${name}</span><i class="radio ${i ? '' : 'checked'}"></i><span class="${i ? '' : 'faded'}">${bulb(i !== 4)}</span><span class="${i ? '' : 'faded'}">${lock}</span><i class="swatch" style="background:${color}"></i><i class="ball"></i><span class="lt">Conti...${arrows}</span><i class="dia" style="background:${color}"></i><span>[</span></div>`).join('');
document.querySelectorAll('.panel').forEach(el => {
  el.innerHTML = `<div class="icon-bar">${icons.map(d => `<svg viewBox="0 0 17.500 16"><path d="${d}"/></svg>`).join('')}</div>
  <div class="head"><span>Name</span><span></span><span></span><span></span><span></span><span></span><span>Linetype</span><span></span><span>...</span></div>
  <div class="rows">${rows}</div>
  <div class="panel-foot"><div class="buttons"><svg width="33" height="12" viewBox="0 0 33 12"><path d="M4.500 6h8M8.500 2v8" stroke="#444"/><path d="M16.500 0v12" stroke="#ddd"/><path d="M20.500 6h8" stroke="#bbb"/></svg></div>
  <div class="gear"><svg width="25" height="12" viewBox="0 0 25 12" fill="none" stroke="#222"><circle cx="7.500" cy="6" r="2.300" stroke-width="1.600"/><circle cx="7.500" cy="6" r="3.500" stroke-width="1.200" stroke-dasharray="1.400 1.350"/><path d="M17 5l2.200 2.200L21.400 5"/></svg></div></div>`;
});
```
